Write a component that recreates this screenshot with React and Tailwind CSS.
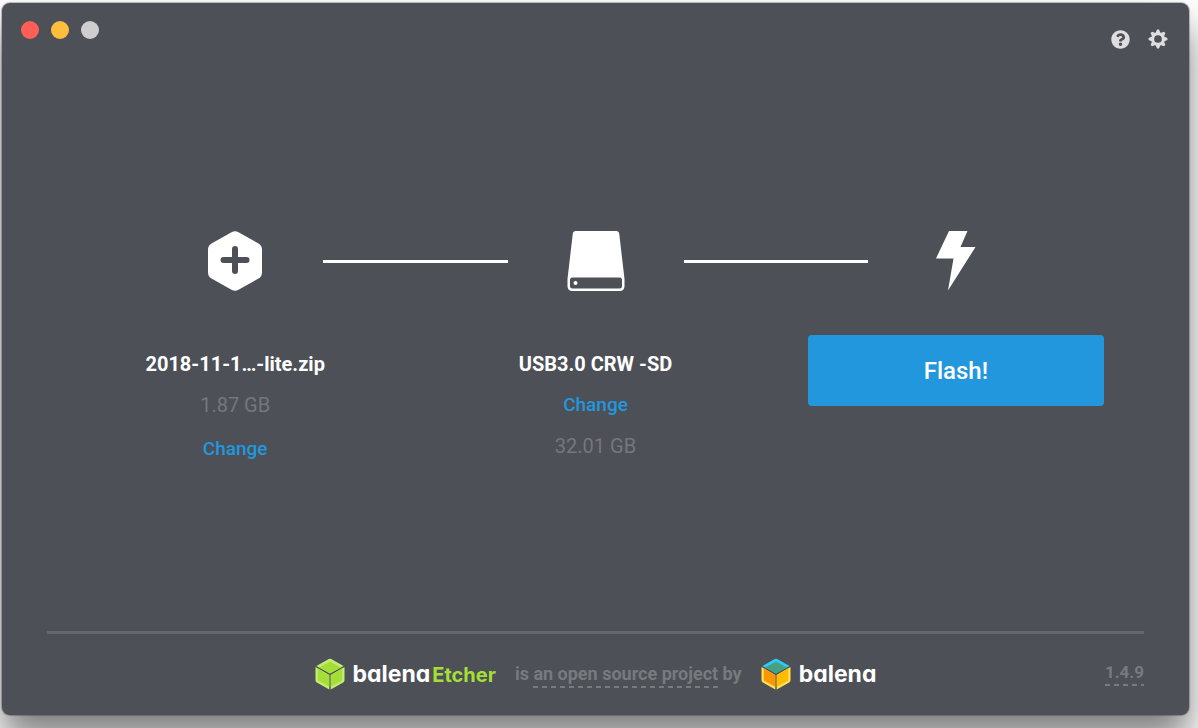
import React from "react";
import { FaQuestionCircle } from "react-icons/fa";

const GEAR_TEETH = [0, 45, 90, 135, 180, 225, 270, 315];

function GearIcon() {
  return (
    <svg viewBox="-10 -10 20 20" className="size-5" fill="currentColor" aria-hidden="true">
      <circle r="5.300" fill="none" stroke="currentColor" strokeWidth="2.900" />
      {GEAR_TEETH.map((a) => (
        <path key={a} d="M-2.500-6 L-1-9.400 H1 L2.500-6Z" transform={`rotate(${a})`} />
      ))}
    </svg>
  );
}

function ImageIcon() {
  return (
    <svg viewBox="0 0 56 60" className="h-[60px] w-14" aria-hidden="true">
      <path
        fill="#fff"
        d="M24.500 1.200Q28-.8 31.500 1.200L51.500 12.500Q55 14.500 55 18.500V41.500Q55 45.500 51.500 47.500L31.500 58.800Q28 60.800 24.500 58.800L4.500 47.500Q1 45.500 1 41.500V18.500Q1 14.500 4.500 12.500Z"
      />
      <path d="M28 18V40M16.500 29H39.500" stroke="#4d5057" strokeWidth="6" strokeLinecap="round" />
    </svg>
  );
}

function DriveIcon() {
  return (
    <svg viewBox="0 0 58 60" className="h-[60px] w-[58px]" aria-hidden="true">
      <path
        fill="#fff"
        d="M8.500 0H49.500Q52 0 52.200 2.500L57.500 48V55Q57.500 60 52.500 60H5.500Q.5 60 .5 55V48L5.800 2.500Q6 0 8.500 0Z"
      />
      <rect x="3" y="46.500" width="52" height="11" rx="2.500" fill="#4d5057" />
      <circle cx="8.500" cy="52" r="2" fill="#fff" />
    </svg>
  );
}

function BoltIcon() {
  return (
    <svg viewBox="0 0 40 60" className="h-[60px] w-10" aria-hidden="true">
      <path fill="#fff" d="M13 0H31.500L24.500 16H39.500L12 59.500L17.500 27.500H0Z" />
    </svg>
  );
}

function Cube({ rims, faces }) {
  return (
    <svg viewBox="0 0 30 32" className="h-8 w-[30px]" aria-hidden="true">
      <path fill={rims[0]} d="M13.800 1.100Q15 .3 16.200 1.100L28.600 7.900L15 15.500L1.400 7.900Z" />
      <path fill={rims[1]} d="M.5 9L14.300 16.900V31.500L1.800 24.500Q.5 23.800 .5 22.300Z" />
      <path fill={rims[2]} d="M29.500 9L15.700 16.900V31.500L28.200 24.500Q29.500 23.800 29.500 22.300Z" />
      <path fill={faces[0]} d="M15 3.500L25.800 9.500L15 15.500L4.200 9.500Z" />
      <path fill={faces[1]} d="M2.800 10.300L14.300 16.900V28.800L2.800 22.500Z" />
      <path fill={faces[2]} d="M27.200 10.300L15.700 16.900V28.800L27.200 22.500Z" />
    </svg>
  );
}

const wordmark = "font-[Inter,sans-serif] leading-8 font-bold [font-feature-settings:'cv11']";
const dashes =
  "bg-[repeating-linear-gradient(90deg,#777b7e_0_5px,transparent_5px_9px)] bg-[length:100%_2px] bg-bottom bg-no-repeat";
const changeLink = "text-[19px] leading-6 font-medium text-[#2297de] cursor-pointer";
const sizeText = "text-xl leading-6 text-[#75777a]";
const titleText = "text-xl leading-6 font-bold text-white";

export default function App() {
  return (
    <div className="flex min-h-screen flex-col overflow-hidden bg-white pt-[3px] pr-[9px] pb-[13px] pl-[2px] font-[Roboto,sans-serif]">
      <div className="flex flex-1 flex-col rounded-lg bg-[#4d5057] shadow-[0_0_1px_1px_rgba(0,0,0,0.25),0_24px_36px_rgba(0,0,0,0.5)]">
        <header className="flex items-start justify-between pt-[18px] pr-[21px] pl-[19px]">
          <div className="flex gap-3">
            <button aria-label="Close" className="size-[18px] rounded-full bg-[#ff5f57]" />
            <button aria-label="Minimize" className="size-[18px] rounded-full bg-[#ffbd3e]" />
            <button aria-label="Zoom" className="size-[18px] rounded-full bg-[#cecece]" />
          </div>
          <div className="flex items-center gap-[18px] pt-2 text-[#dedede]">
            <button aria-label="Help" className="flex size-5 items-center justify-center">
              <FaQuestionCircle className="size-[19px]" />
            </button>
            <button aria-label="Settings" className="flex size-5 items-center justify-center">
              <GearIcon />
            </button>
          </div>
        </header>

        <main className="flex-1 px-[85px] pt-[182px]">
          <div className="flex items-center px-[60px]">
            <div className="flex w-44 justify-center"><ImageIcon /></div>
            <div className="h-[3px] flex-1 bg-white" />
            <div className="flex w-44 justify-center"><DriveIcon /></div>
            <div className="h-[3px] flex-1 bg-white" />
            <div className="flex w-44 justify-center"><BoltIcon /></div>
          </div>
          <div className="grid grid-cols-3 gap-16 pt-11 text-center">
            <section className="flex flex-col items-center pt-[17px]">
              <h2 className={titleText}>2018-11-1…-lite.zip</h2>
              <p className={`mt-[17px] ${sizeText}`}>1.87 GB</p>
              <button className={`mt-5 ${changeLink}`}>Change</button>
            </section>
            <section className="flex flex-col items-center pt-[17px]">
              <h2 className={titleText}>USB3.0 CRW -SD</h2>
              <button className={`mt-[17px] ${changeLink}`}>Change</button>
              <p className={`mt-[17px] ${sizeText}`}>32.01 GB</p>
            </section>
            <section>
              <button className="h-[71px] w-full rounded bg-[#2297de] text-2xl font-medium text-white">
                Flash!
              </button>
            </section>
          </div>
        </main>

        <footer className="mx-[45px] grid h-[84px] grid-cols-[1fr_auto_1fr] items-start border-t-3 border-[#65686a]">
          <div />
          <div className="flex items-center pt-6">
            <a href="#etcher" className="flex items-center gap-2">
              <Cube rims={["#c1ee72", "#c1ee72", "#c1ee72"]} faces={["#a5de37", "#a5de37", "#a5de37"]} />
              <span className={`${wordmark} text-[23px] text-white`}>
                balena<span className="ml-0.5 text-xl text-[#a5de37]">Etcher</span>
              </span>
            </a>
            <p className="mx-[19px] text-lg leading-7 font-bold text-[#777b7e]">
              is{" "}
              <a href="#source" className={`inline-block ${dashes}`}>an open source project</a>{" "}
              by
            </p>
            <a href="#balena" className="flex items-center gap-2">
              <Cube rims={["#2ccbfb", "#ffdf55", "#ffdf55"]} faces={["#45a183", "#ff9500", "#ffbb00"]} />
              <span className={`${wordmark} text-[23px] text-white`}>balena</span>
            </a>
          </div>
          <a
            href="#changelog"
            className={`mt-6 justify-self-end text-[17px] leading-7 font-bold text-[#777b7e] ${dashes}`}
          >
            1.4.9
          </a>
        </footer>
      </div>
    </div>
  );
}
